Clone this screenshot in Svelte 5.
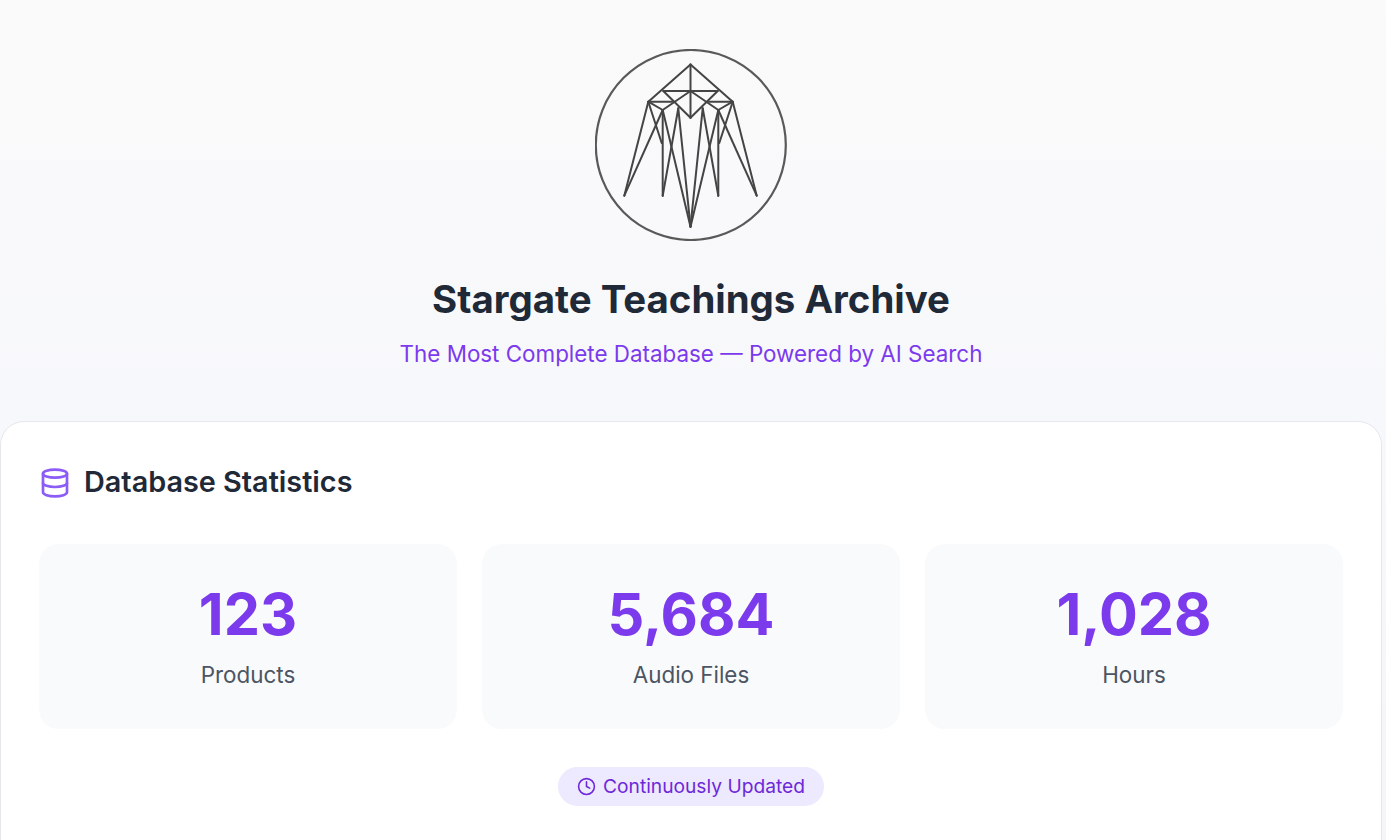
<script>
  const stats = [
    { value: '123', label: 'Products' },
    { value: '5,684', label: 'Audio Files' },
    { value: '1,028', label: 'Hours' }
  ];
  const half = [
    [648.3, 101.7, 624.3, 195.7],
    [648.3, 101.7, 661.7, 143],
    [662.7, 110, 624.3, 195.7],
    [662.7, 110, 662.7, 195.7],
    [662.7, 110, 690.5, 226.7],
    [678.3, 108.3, 662.7, 195.7],
    [678.3, 108.3, 690.5, 226.7],
    [690.5, 64.5, 648.3, 101.7],
    [663.3, 91, 690.5, 117.7],
    [648.3, 101.7, 662.7, 110],
    [690.5, 91, 662.7, 110],
    [648.3, 101.7, 672, 101.7]
  ];
  const lines = half.flatMap(([a, b, c, d]) => [
    [a - 595, b - 49, c - 595, d - 49],
    [1381 - a - 595, b - 49, 1381 - c - 595, d - 49]
  ]);
</script>

<div class="page">
  <header class="hero">
    <svg class="logo" viewBox="0 0 192 192" width="192" height="192" aria-label="Stargate Teachings Archive logo">
      <circle cx="95.8" cy="96" r="95" fill="none" stroke="#595959" stroke-width="2.2" />
      <g stroke="#444444" stroke-width="2" stroke-linecap="round" fill="none">
        {#each lines as l}
          <line x1={l[0]} y1={l[1]} x2={l[2]} y2={l[3]} />
        {/each}
        <line x1="95.5" y1="15.5" x2="95.5" y2="68.7" />
        <line x1="68.3" y1="42" x2="122.7" y2="42" />
      </g>
    </svg>
    <h1>Stargate Teachings Archive</h1>
    <p class="tagline">The Most Complete Database — Powered by AI Search</p>
  </header>

  <section class="card">
    <div class="heading">
      <svg class="db-icon" viewBox="0 0 24 24" width="32" height="32" fill="none" stroke="#8b5cf6" stroke-width="2" stroke-linecap="round" stroke-linejoin="round">
        <ellipse cx="12" cy="5" rx="9" ry="3" />
        <path d="M3 5V19A9 3 0 0 0 21 19V5" />
        <path d="M3 12A9 3 0 0 0 21 12" />
      </svg>
      <h2>Database Statistics</h2>
    </div>
    <div class="grid">
      {#each stats as s}
        <div class="stat">
          <div class="value">{s.value}</div>
          <div class="label">{s.label}</div>
        </div>
      {/each}
    </div>
    <div class="badge-row">
      <span class="badge">
        <svg viewBox="0 0 24 24" width="19" height="19" fill="none" stroke="currentColor" stroke-width="2" stroke-linecap="round" stroke-linejoin="round">
          <circle cx="12" cy="12" r="10" />
          <polyline points="12 6 12 12 16 14" />
        </svg>
        <span class="badge-text">Continuously Updated</span>
      </span>
    </div>
  </section>
</div>

<style>
  :global(body) {
    margin: 0;
    font-family: Inter, "Liberation Sans", sans-serif;
    background: linear-gradient(180deg, #fafafa 0%, #f7f8fb 50%, #f4f5f9 100%);
    min-height: 840px;
  }
  .page {
    width: 1382px;
    height: 840px;
    overflow: hidden;
  }
  .hero {
    display: flex;
    flex-direction: column;
    align-items: center;
    padding-top: 49px;
    height: 421px;
    box-sizing: border-box;
  }
  .logo {
    display: block;
  }
  h1 {
    margin: 36px 0 0;
    font-size: 38.4px;
    line-height: 44px;
    font-weight: 700;
    color: #1f2937;
  }
  .tagline {
    margin: 19px 0 0;
    font-size: 22.4px;
    line-height: 28px;
    color: #7c3aed;
  }
  .card {
    box-sizing: border-box;
    height: 480px;
    background: #ffffff;
    border: 1px solid #e5e7eb;
    border-radius: 24px;
    padding: 38px;
  }
  .heading {
    display: flex;
    align-items: center;
    gap: 13px;
    height: 44px;
  }
  .db-icon {
    margin-top: 2px;
  }
  h2 {
    margin: 0 0 2px;
    font-size: 28.8px;
    font-weight: 600;
    color: #1f2937;
  }
  .grid {
    display: grid;
    grid-template-columns: repeat(3, 418px);
    gap: 25px;
    margin-top: 40px;
  }
  .stat {
    height: 185px;
    box-sizing: border-box;
    background: #f9fafb;
    border-radius: 20px;
    padding-top: 36px;
    text-align: center;
  }
  .value {
    font-size: 57.6px;
    line-height: 68px;
    font-weight: 700;
    color: #7c3aed;
  }
  .label {
    margin-top: 13px;
    font-size: 22.4px;
    line-height: 28px;
    color: #4b5563;
  }
  .badge-row {
    display: flex;
    justify-content: center;
    margin-top: 38px;
  }
  .badge {
    display: inline-flex;
    align-items: center;
    gap: 7px;
    height: 39px;
    padding: 0 19px;
    border-radius: 20px;
    background: #ede9fe;
    color: #6d28d9;
    font-size: 19.2px;
    font-weight: 400;
  }
  .badge-text {
    margin-bottom: 2px;
  }
</style>
